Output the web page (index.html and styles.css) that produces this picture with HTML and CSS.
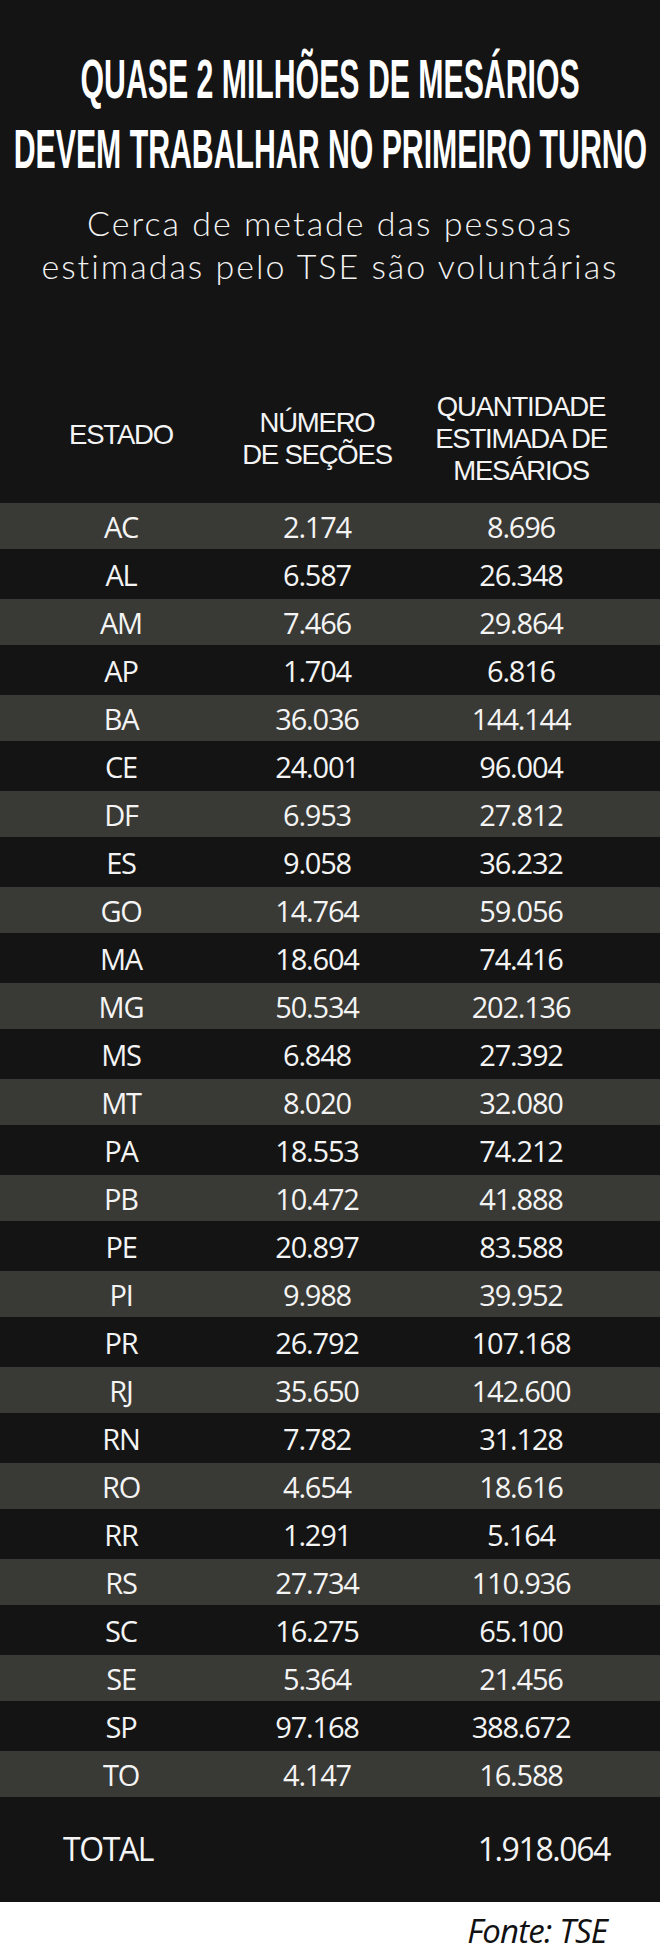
FILE: index.html
```html
<!DOCTYPE html>
<html lang="pt-BR">
<head>
<meta charset="utf-8">
<title>Mesários</title>
<link rel="stylesheet" href="styles.css">
</head>
<body>
<div class="graphic">
  <h1 class="title">
    <span class="title-line"><span class="title-text">QUASE 2 MILHÕES DE MESÁRIOS</span></span>
    <span class="title-line"><span class="title-text">DEVEM TRABALHAR NO PRIMEIRO TURNO</span></span>
  </h1>
  <p class="subtitle">Cerca de metade das pessoas<br>estimadas pelo TSE são voluntárias</p>
  <div class="head">
    <div class="hcell hcell-state">ESTADO</div>
    <div class="hcell"><div class="hline">NÚMERO</div><div class="hline">DE SEÇÕES</div></div>
    <div class="hcell"><div class="hline">QUANTIDADE</div><div class="hline">ESTIMADA DE</div><div class="hline">MESÁRIOS</div></div>
  </div>
  <div class="rows">
    <div class="row"><span>AC</span><span>2.174</span><span>8.696</span></div>
    <div class="row"><span>AL</span><span>6.587</span><span>26.348</span></div>
    <div class="row"><span>AM</span><span>7.466</span><span>29.864</span></div>
    <div class="row"><span>AP</span><span>1.704</span><span>6.816</span></div>
    <div class="row"><span>BA</span><span>36.036</span><span>144.144</span></div>
    <div class="row"><span>CE</span><span>24.001</span><span>96.004</span></div>
    <div class="row"><span>DF</span><span>6.953</span><span>27.812</span></div>
    <div class="row"><span>ES</span><span>9.058</span><span>36.232</span></div>
    <div class="row"><span>GO</span><span>14.764</span><span>59.056</span></div>
    <div class="row"><span>MA</span><span>18.604</span><span>74.416</span></div>
    <div class="row"><span>MG</span><span>50.534</span><span>202.136</span></div>
    <div class="row"><span>MS</span><span>6.848</span><span>27.392</span></div>
    <div class="row"><span>MT</span><span>8.020</span><span>32.080</span></div>
    <div class="row"><span>PA</span><span>18.553</span><span>74.212</span></div>
    <div class="row"><span>PB</span><span>10.472</span><span>41.888</span></div>
    <div class="row"><span>PE</span><span>20.897</span><span>83.588</span></div>
    <div class="row"><span>PI</span><span>9.988</span><span>39.952</span></div>
    <div class="row"><span>PR</span><span>26.792</span><span>107.168</span></div>
    <div class="row"><span>RJ</span><span>35.650</span><span>142.600</span></div>
    <div class="row"><span>RN</span><span>7.782</span><span>31.128</span></div>
    <div class="row"><span>RO</span><span>4.654</span><span>18.616</span></div>
    <div class="row"><span>RR</span><span>1.291</span><span>5.164</span></div>
    <div class="row"><span>RS</span><span>27.734</span><span>110.936</span></div>
    <div class="row"><span>SC</span><span>16.275</span><span>65.100</span></div>
    <div class="row"><span>SE</span><span>5.364</span><span>21.456</span></div>
    <div class="row"><span>SP</span><span>97.168</span><span>388.672</span></div>
    <div class="row"><span>TO</span><span>4.147</span><span>16.588</span></div>
  </div>
  <div class="total">
    <span>TOTAL</span>
    <span>1.918.064</span>
  </div>
</div>
<div class="footer">Fonte: TSE</div>
</body>
</html>
```

FILE: styles.css
```css
* { box-sizing: border-box; }

html, body {
  margin: 0;
  padding: 0;
  background: #ffffff;
}

body {
  width: 660px;
  font-family: "Open Sans", "Liberation Sans", sans-serif;
  color: #f4f4f4;
}

.graphic {
  background: #141414;
  height: 1902px;
  overflow: hidden;
}

.title {
  margin: 0;
  padding-top: 44px;
  font-family: "Liberation Sans", Arial, sans-serif;
  font-weight: 700;
  font-size: 56px;
  line-height: 70px;
  color: #ffffff;
}

.title-line {
  display: flex;
  justify-content: center;
  height: 70px;
}

.title-text {
  white-space: nowrap;
  transform: scaleX(0.54);
  transform-origin: center;
}

.subtitle {
  margin: 17px 0 0;
  font-family: "Lato", "Open Sans", sans-serif;
  font-weight: 300;
  font-size: 34px;
  line-height: 43px;
  letter-spacing: 2px;
  text-align: center;
  color: #f2f2f2;
}

.head {
  margin-top: 104px;
  height: 96px;
  display: grid;
  grid-template-columns: 242px 150px 258px;
  align-items: center;
  font-family: "Liberation Sans", Arial, sans-serif;
  font-size: 27.5px;
  letter-spacing: -1.2px;
  text-align: center;
}

.hline {
  height: 32px;
  line-height: 32px;
  white-space: nowrap;
}

.hcell-state {
  line-height: 32px;
  padding-bottom: 8px;
}

.rows {
  margin-top: 16px;
}

.row {
  display: grid;
  grid-template-columns: 242px 150px 258px;
  align-items: center;
  height: 50px;
  font-size: 29px;
  letter-spacing: -1.2px;
  text-align: center;
}

.row:nth-child(odd) {
  height: 46px;
  background: #393935;
}

.total {
  height: 106px;
  display: flex;
  justify-content: space-between;
  align-items: center;
  padding: 0 50px 4px 63px;
  font-size: 32px;
  letter-spacing: -1.4px;
}

.footer {
  height: 54px;
  padding: 4px 53px 0 0;
  text-align: right;
  font-style: italic;
  font-size: 33px;
  line-height: 50px;
  letter-spacing: -0.8px;
  color: #111111;
}
```
